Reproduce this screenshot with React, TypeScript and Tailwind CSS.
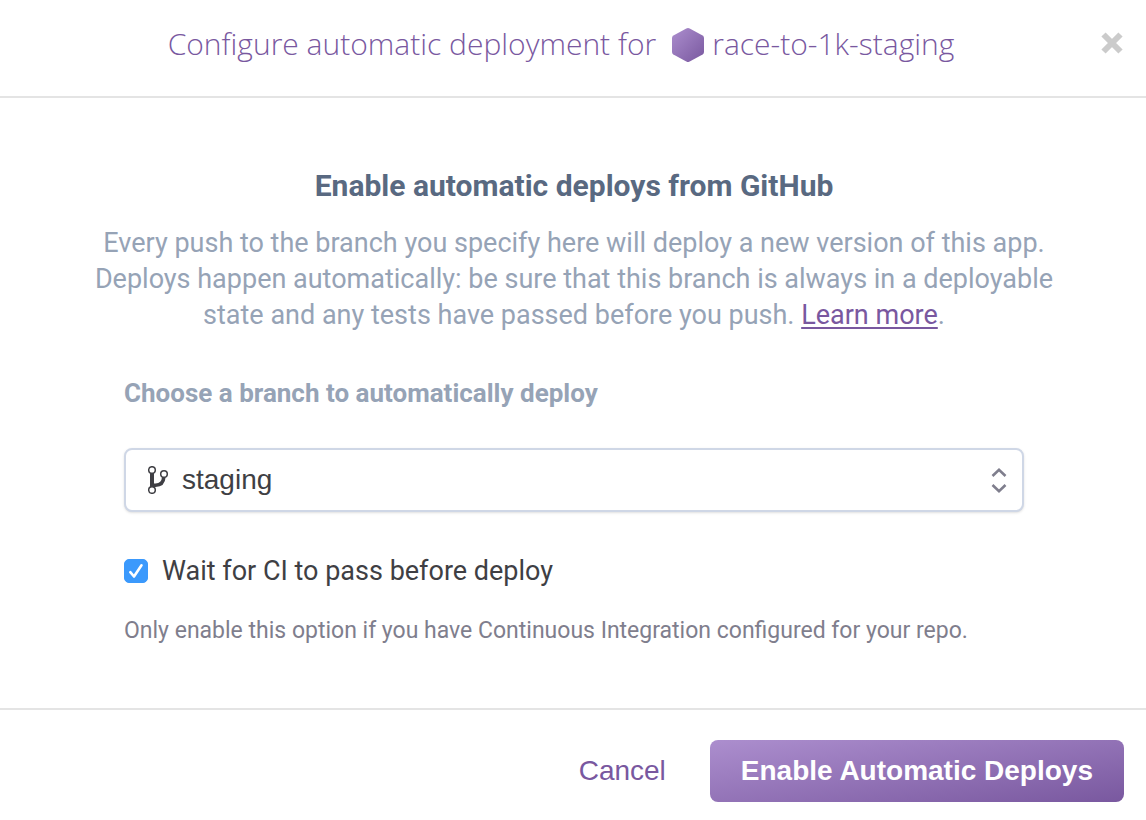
import React, { useState } from "react";

function HexagonIcon() {
  return (
    <svg width="32" height="36" viewBox="0 -2 32 36" aria-hidden="true" className="shrink-0">
      <defs>
        <linearGradient id="hexagon-fill" x1="0" y1="0" x2="1" y2="1">
          <stop offset="0" stopColor="#ac8ece" />
          <stop offset="1" stopColor="#79589f" />
        </linearGradient>
      </defs>
      <path
        d="M14.3.4a3.6 3.6 0 0 1 3.4 0l12.9 7.2A2.8 2.8 0 0 1 32 10v14a2.8 2.8 0 0 1-1.4 2.4l-12.9 7.2a3.6 3.6 0 0 1-3.4 0L1.4 26.4A2.8 2.8 0 0 1 0 24V10a2.8 2.8 0 0 1 1.4-2.4z"
        fill="url(#hexagon-fill)"
      />
    </svg>
  );
}

function BranchIcon() {
  return (
    <svg
      width="22"
      height="28"
      viewBox="0 0 22 28"
      fill="none"
      stroke="#3f3f44"
      aria-hidden="true"
      className="pointer-events-none absolute top-[18px] left-6"
    >
      <path d="M4 7v14" strokeWidth="4" />
      <path d="M4 19.200h3.500c5 0 8-3 8.300-8" strokeWidth="3.600" />
      <circle cx="4" cy="4" r="3.300" fill="#fff" strokeWidth="1.500" />
      <circle cx="4" cy="24" r="3.300" fill="#fff" strokeWidth="1.500" />
      <circle cx="16" cy="8" r="3.300" fill="#fff" strokeWidth="1.500" />
    </svg>
  );
}

export default function App() {
  const [branch, setBranch] = useState("staging");
  const [waitForCi, setWaitForCi] = useState(true);

  return (
    <div
      role="dialog"
      aria-labelledby="dialog-title"
      className="flex min-h-screen flex-col bg-white font-['Roboto',sans-serif]"
    >
      <header className="relative flex justify-center border-b-2 border-[#e4e4e4] pt-6 pr-[88px] pb-8 pl-16">
        <h1
          id="dialog-title"
          className="flex items-center font-['Open_Sans',sans-serif] text-[30px] leading-10 font-light text-[#79589f]"
        >
          <span className="mr-4">Configure automatic deployment for</span>
          <HexagonIcon />
          <span className="ml-2">race-to-1k-staging</span>
        </h1>
        <button type="button" aria-label="Close" className="absolute top-8 right-[22px]">
          <svg width="24" height="22" viewBox="0 0 24 22" aria-hidden="true">
            <path d="M3.500 2.500l17 17M20.500 2.500l-17 17" stroke="#cbcbcb" strokeWidth="6" />
          </svg>
        </button>
      </header>

      <main className="flex grow flex-col pt-[70px] pr-[78px] pb-14 pl-20">
        <h2 className="text-center text-[30px] leading-9 font-bold text-[#596981]">
          Enable automatic deploys from GitHub
        </h2>
        <p className="mt-[21px] text-center text-[27px] leading-9 text-[#96a3b6]">
          Every push to the branch you specify here will deploy a new version of this app.
          <br />
          Deploys happen automatically: be sure that this branch is always in a deployable
          <br />
          state and any tests have passed before you push.{" "}
          <a href="#learn-more" className="text-[#79589f] underline decoration-2 underline-offset-3">
            Learn more
          </a>
          .
        </p>

        <div className="mx-11 mt-11 flex flex-col">
          <label htmlFor="branch" className="text-[26px] leading-8 font-bold text-[#96a3b6]">
            Choose a branch to automatically deploy
          </label>
          <div className="relative mt-[39px]">
            <BranchIcon />
            <select
              id="branch"
              value={branch}
              onChange={(e) => setBranch(e.target.value)}
              className="h-16 w-full appearance-none rounded-lg border-2 border-[#cfd7e6] bg-white pr-14 pl-14 font-['Liberation_Sans',sans-serif] text-[28px] text-[#3f3f44] shadow-sm"
            >
              <option value="staging">staging</option>
              <option value="master">master</option>
            </select>
            <svg
              width="16"
              height="26"
              viewBox="0 0 16 26"
              fill="none"
              stroke="#7f7e8d"
              strokeWidth="2.600"
              aria-hidden="true"
              className="pointer-events-none absolute top-5 right-[17px]"
            >
              <path d="M1.500 8L8 1.800 14.500 8M1.500 17L8 23.200 14.500 17" />
            </svg>
          </div>

          <div className="mt-[39px] flex items-center">
            <span className="relative flex h-6 w-6">
              <input
                id="wait-for-ci"
                type="checkbox"
                checked={waitForCi}
                onChange={(e) => setWaitForCi(e.target.checked)}
                className="h-6 w-6 appearance-none rounded-[5px] border border-[#3b99fc] bg-white checked:bg-[#3b99fc]"
              />
              {waitForCi && (
                <svg
                  width="24"
                  height="24"
                  viewBox="0 0 24 24"
                  fill="none"
                  stroke="#fff"
                  strokeWidth="2.600"
                  strokeLinecap="round"
                  strokeLinejoin="round"
                  aria-hidden="true"
                  className="pointer-events-none absolute inset-0"
                >
                  <path d="M6.300 13.200L10 17.500 17.500 6.300" />
                </svg>
              )}
            </span>
            <label htmlFor="wait-for-ci" className="ml-3.5 text-[27px] leading-10 text-[#3f3f44]">
              Wait for CI to pass before deploy
            </label>
          </div>
          <p className="mt-6 text-[23px] leading-8 text-[#7f7e8d]">
            Only enable this option if you have Continuous Integration configured for your repo.
          </p>
        </div>
      </main>

      <footer className="flex items-center justify-end gap-11 border-t-2 border-[#e4e4e4] pt-[30px] pr-[22px] pb-[18px] font-['Liberation_Sans',sans-serif] text-[28px] leading-8">
        <button type="button" className="text-[#79589f]">
          Cancel
        </button>
        <button
          type="button"
          className="rounded-lg bg-linear-[171deg,#ac8ece,#79589f] px-[31px] py-[15px] font-bold text-white"
        >
          Enable Automatic Deploys
        </button>
      </footer>
    </div>
  );
}
